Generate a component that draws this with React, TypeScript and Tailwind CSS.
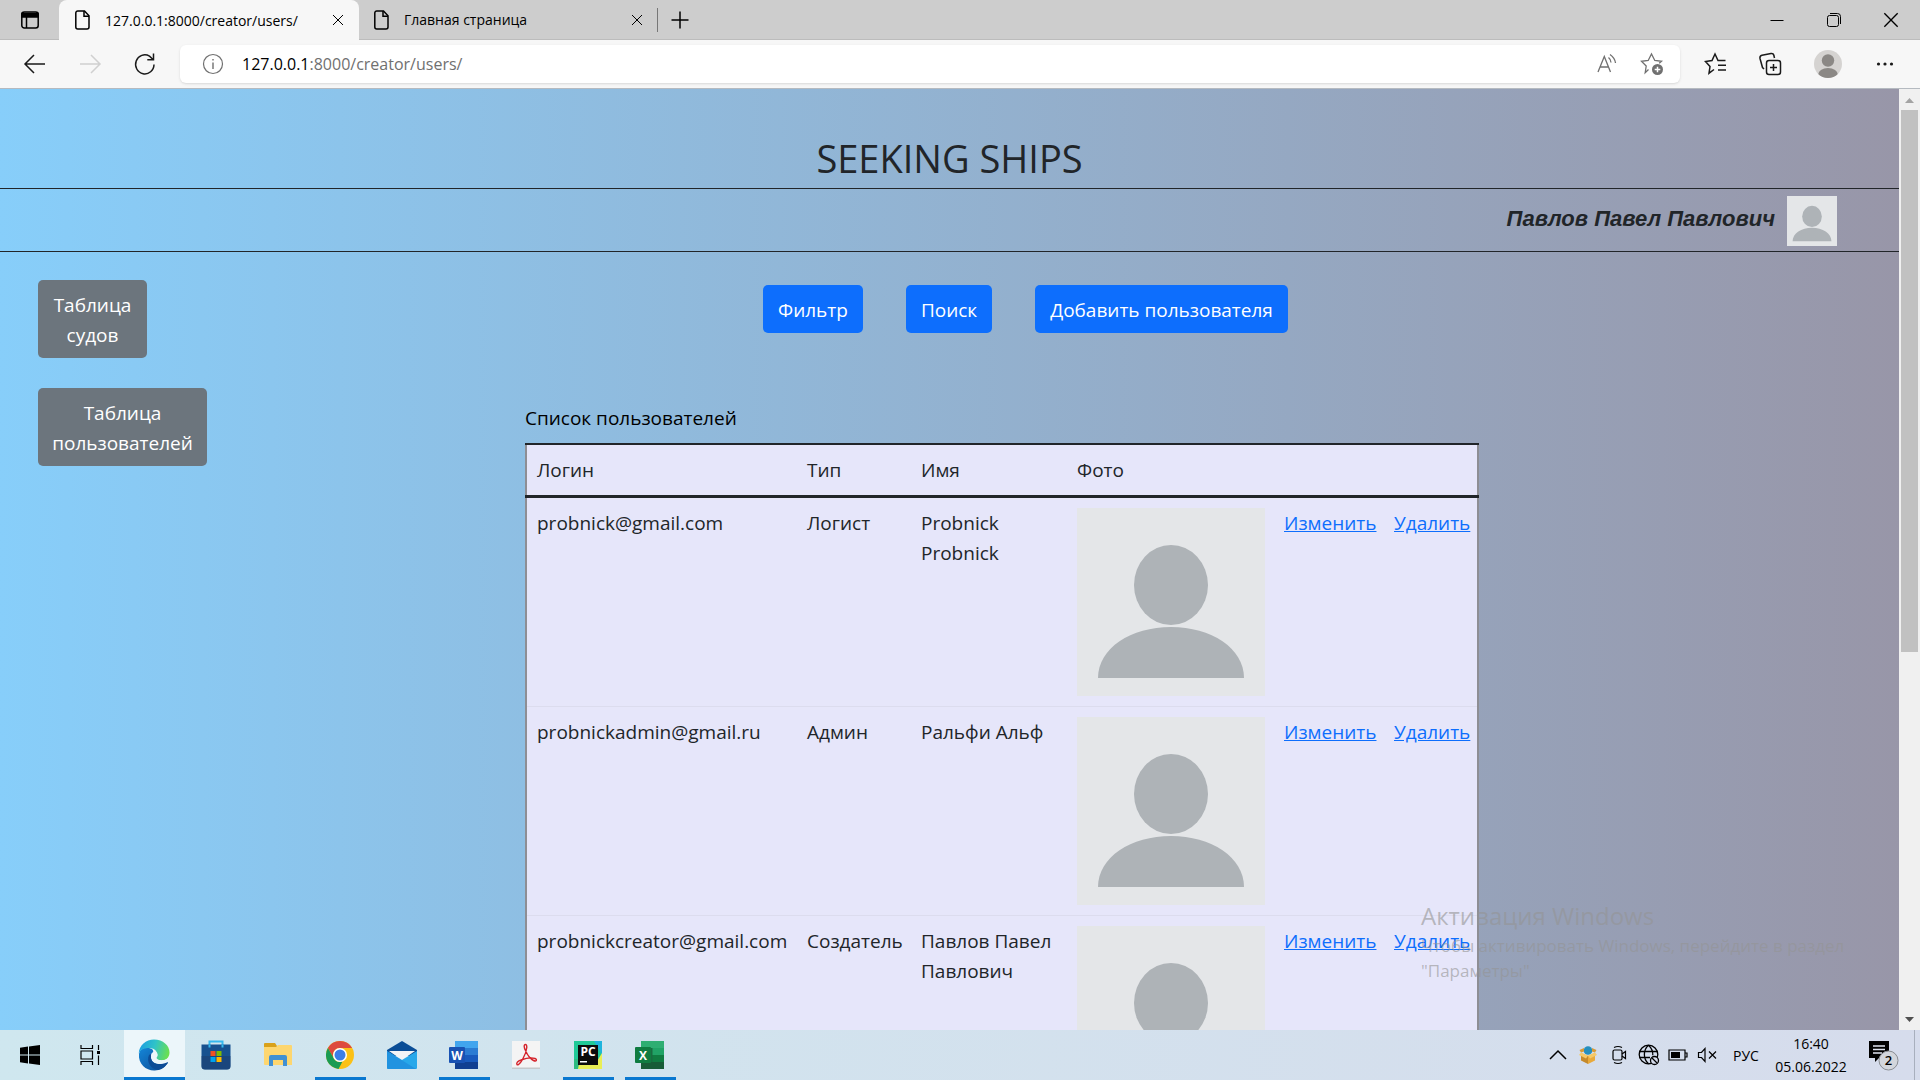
import React from "react";

type IconProps = { className?: string; children: React.ReactNode; box?: string };

function Icon({ className = "size-6", children, box = "0 0 24 24" }: IconProps) {
  return (
    <svg viewBox={box} className={className + " shrink-0"} fill="none" stroke="currentColor" strokeWidth="1.5" aria-hidden="true">
      {children}
    </svg>
  );
}

function PageIcon() {
  return (
    <Icon className="size-5" box="0 0 20 20">
      <path d="M4.8 1h6.7L16 5.800V17a2 2 0 0 1-2 2H4.800a2 2 0 0 1-2-2V3a2 2 0 0 1 2-2Z" />
      <path d="M11 1v5.300h5" />
    </Icon>
  );
}

function CloseIcon({ className = "size-3" }: { className?: string }) {
  return (
    <Icon className={className} box="0 0 12 12">
      <path strokeWidth="1" d="M1 1l10 10M11 1L1 11" />
    </Icon>
  );
}

function TabStrip() {
  return (
    <div className="flex h-10 items-stretch bg-[#cdcdcd] text-[14px] text-black">
      <button aria-label="Меню вкладок" className="flex w-[59px] items-center justify-center border-b border-[#bcbcbc]">
        <Icon className="size-5" box="0 0 20 20">
          <rect x="1.800" y="2" width="16.400" height="16" rx="2.500" />
          <path d="M2 3.500h16v3.500H2z" fill="currentColor" />
          <path d="M6.500 7v11" />
        </Icon>
      </button>
      <div className="flex w-[300px] items-center rounded-t-lg bg-[#f7f7f7] pr-[15px] pl-[14px]">
        <PageIcon />
        <span className="ml-3 flex-1 whitespace-nowrap">127.0.0.1:8000/creator/users/</span>
        <button aria-label="Закрыть вкладку"><CloseIcon /></button>
      </div>
      <div className="flex w-[298px] items-center border-b border-[#bcbcbc] pr-[14px] pl-[13px]">
        <PageIcon />
        <span className="ml-3 flex-1 whitespace-nowrap">Главная страница</span>
        <button aria-label="Закрыть вкладку"><CloseIcon /></button>
      </div>
      <div className="flex flex-1 items-center border-b border-[#bcbcbc]">
        <span className="h-6 w-px bg-[#777]" />
        <button aria-label="Новая вкладка" className="ml-3">
          <Icon className="size-5" box="0 0 20 20"><path d="M10 1.500v17M1.500 10h17" /></Icon>
        </button>
        <div className="ml-auto flex">
          <button aria-label="Свернуть" className="flex w-[57px] justify-center">
            <Icon className="size-4" box="0 0 16 16"><path strokeWidth="1" d="M1.500 8.500h13" /></Icon>
          </button>
          <button aria-label="Восстановить" className="flex w-[57px] justify-center">
            <Icon className="size-4" box="0 0 16 16">
              <rect strokeWidth="1" x="1.500" y="3.500" width="11" height="11" rx="2" />
              <path strokeWidth="1" d="M4 1.500h7.500a3 3 0 0 1 3 3V12" />
            </Icon>
          </button>
          <button aria-label="Закрыть" className="flex w-[58px] justify-center">
            <CloseIcon className="size-4" />
          </button>
        </div>
      </div>
    </div>
  );
}

function Toolbar() {
  return (
    <div className="flex h-[49px] items-center border-b border-[#b5bac0] bg-[#f7f7f7] text-[#1a1a1a]">
      <div className="flex w-[180px] items-center gap-[31px] pl-[23px]">
        <button aria-label="Назад">
          <Icon><path d="M22 12H2.500M11 3L2 12l9 9" /></Icon>
        </button>
        <button aria-label="Вперёд" className="text-[#d0d0d0]">
          <Icon><path d="M2 12h19.500M13 3l9 9-9 9" /></Icon>
        </button>
        <button aria-label="Обновить">
          <Icon><path d="M21 12.500A9.200 9.500 0 1 1 16.500 4.200L20 7.500M20.500 1.500v6.200h-6.200" /></Icon>
        </button>
      </div>
      <div className="flex h-[38px] flex-1 items-center rounded-md bg-white pr-4 pl-[22px] text-[#707070] shadow-sm">
        <Icon className="size-[22px]" box="0 0 22 22">
          <circle strokeWidth="1.200" cx="11" cy="11" r="9.500" />
          <path strokeWidth="1.400" d="M11 9.500v6.500M11 6v1.500" />
        </Icon>
        <span className="ml-[18px] flex-1 text-[16px] whitespace-nowrap">
          <span className="text-black">127.0.0.1</span>:8000/creator/users/
        </span>
        <button aria-label="Прочесть вслух" className="mr-[22px]">
          <Icon className="size-[22px]" box="0 0 22 22">
            <path strokeWidth="1.300" d="M2 19L8.300 3.500 14.500 19M4.200 14h8.200" />
            <path strokeWidth="1.300" d="M12.500 4.500q2.500 2 2.500 5M14 1.500q5 3.500 5.500 8.500" />
          </Icon>
        </button>
        <button aria-label="Добавить в избранное">
          <Icon>
            <path strokeWidth="1.300" d="M8.500 17.500L5.200 20.700l1-6.700-4.700-4.700 6.700-.8L11.500 2l3.300 6.500 6.700.8-2.300 2" />
            <circle cx="17.500" cy="17.500" r="5.500" fill="currentColor" stroke="none" />
            <path stroke="#fff" d="M17.500 14.700v5.600M14.700 17.500h5.600" />
          </Icon>
        </button>
      </div>
      <div className="flex w-[240px] items-center pl-6">
        <button aria-label="Избранное">
          <Icon>
            <path d="M10 17.500l-5 3.700 1-6.700L1.500 9.500l6.500-1L11 2l3 6.500h7.500M14 13.300h8M14 18h8" />
          </Icon>
        </button>
        <button aria-label="Коллекции" className="ml-[30px]">
          <Icon>
            <rect x="8.500" y="8.500" width="14" height="14" rx="2.500" />
            <path d="M15.500 12v7M12 15.500h7M6 17l-1.500-1.500L2 6.500Q1.500 4 4 3.300L13 1.500Q15.500 1 16 4l.5 2" />
          </Icon>
        </button>
        <button aria-label="Профиль" className="ml-8 size-7 overflow-hidden rounded-full bg-[#d5d3d1]">
          <Icon className="size-7" box="0 0 28 28">
            <circle cx="14" cy="10.500" r="6.200" fill="#8b8885" stroke="none" />
            <ellipse cx="14" cy="25" rx="10" ry="7" fill="#8b8885" stroke="none" />
          </Icon>
        </button>
        <button aria-label="Настройки" className="ml-[31px]">
          <Icon>
            <g fill="currentColor" stroke="none"><circle cx="5.500" cy="12" r="1.600" /><circle cx="12" cy="12" r="1.600" /><circle cx="18.500" cy="12" r="1.600" /></g>
          </Icon>
        </button>
      </div>
    </div>
  );
}

function Avatar({ className }: { className: string }) {
  return (
    <svg viewBox="0 0 188 188" className={className} role="img" aria-label="Фото пользователя">
      <path fill="#e4e6e8" d="M0 0h188v188H0z" />
      <ellipse cx="94" cy="77" rx="37" ry="40" fill="#aeb3b7" />
      <path fill="#aeb3b7" d="M21 170C21 140 54 119 94 119s73 21 73 51z" />
    </svg>
  );
}

const users = [
  { login: "probnick@gmail.com", type: "Логист", name: "Probnick Probnick" },
  { login: "probnickadmin@gmail.ru", type: "Админ", name: "Ральфи Альф" },
  { login: "probnickcreator@gmail.com", type: "Создатель", name: "Павлов Павел Павлович" },
];

function UsersTable() {
  return (
    <table className="w-full table-fixed border-collapse border-2 border-[#8e8e94] bg-[#e6e6fa] text-left">
      <caption className="pb-[10px] text-left text-black">Список пользователей</caption>
      <colgroup>
        <col className="w-[271px]" />
        <col className="w-[114px]" />
        <col className="w-[156px]" />
        <col className="w-[207px]" />
        <col className="w-[110px]" />
        <col />
      </colgroup>
      <thead>
        <tr className="border-t-2 border-b-3 border-[#212529]">
          {["Логин", "Тип", "Имя", "Фото"].map((title) => (
            <th key={title} scope="col" className="p-[10px] font-normal">{title}</th>
          ))}
          <td />
          <td />
        </tr>
      </thead>
      <tbody className="align-top">
        {users.map((user) => (
          <tr key={user.login} className="border-b border-[#dcdcee]">
            <td className="p-[10px]">{user.login}</td>
            <td className="p-[10px]">{user.type}</td>
            <td className="p-[10px]">{user.name}</td>
            <td className="p-[10px]"><Avatar className="block size-[188px]" /></td>
            <td className="p-[10px]"><a href="#edit" className="text-[#0d6efd] underline">Изменить</a></td>
            <td className="p-[10px]"><a href="#delete" className="text-[#0d6efd] underline">Удалить</a></td>
          </tr>
        ))}
      </tbody>
    </table>
  );
}

function Page() {
  return (
    <div className="min-w-0 flex-1 overflow-hidden bg-linear-to-r from-[#87cefa] to-[#9896a8] text-[19px] leading-[30px] text-[#212529]">
      <header>
        <h1 className="border-b border-[#212529] pt-[45px] pb-[6px] text-center text-[38px] leading-12">SEEKING SHIPS</h1>
        <div className="flex h-[63px] items-center justify-end gap-3 border-b border-[#212529] pr-[62px] pt-px">
          <span className="pb-1 font-['Liberation_Sans',sans-serif] text-[22px] font-bold italic">Павлов Павел Павлович</span>
          <Avatar className="size-[50px]" />
        </div>
      </header>
      <div className="flex">
        <nav className="flex w-[525px] shrink-0 flex-col items-start gap-[30px] pt-7 pl-[38px]">
          <button className="w-[109px] rounded-[5px] bg-[#6c757d] px-[14px] pt-[10px] pb-2 text-white">Таблица судов</button>
          <button className="w-[169px] rounded-[5px] bg-[#6c757d] px-[14px] pt-[10px] pb-2 text-white">Таблица пользователей</button>
        </nav>
        <main className="w-[954px] shrink-0">
          <div className="flex gap-[43px] pt-[33px] pb-[70px] pl-[238px]">
            {["Фильтр", "Поиск", "Добавить пользователя"].map((label) => (
              <button key={label} className="rounded-[5px] bg-[#0d6efd] px-[15px] pt-[10px] pb-2 whitespace-nowrap text-white">{label}</button>
            ))}
          </div>
          <UsersTable />
        </main>
      </div>
    </div>
  );
}

function Scrollbar() {
  return (
    <div className="flex w-[21px] shrink-0 flex-col items-center bg-[#f0f0f0]" aria-hidden="true">
      <Icon className="h-[21px] w-[21px]" box="0 0 21 21"><path d="M6 14h9l-4.500-5z" fill="#a3a3a3" stroke="none" /></Icon>
      <div className="h-[542px] w-[17px] bg-[#c1c1c1]" />
      <Icon className="mt-auto h-[21px] w-[21px]" box="0 0 21 21"><path d="M6 8h9l-4.500 5z" fill="#505050" stroke="none" /></Icon>
    </div>
  );
}

function EdgeLogo() {
  return (
    <svg viewBox="0 0 32 32" className="size-8" aria-hidden="true">
      <defs>
        <linearGradient id="edgeTop" x1="0" y1="0.300" x2="1" y2="0.500">
          <stop offset="0" stopColor="#1b9de2" /><stop offset=".5" stopColor="#2fc3c8" /><stop offset="1" stopColor="#6be04f" />
        </linearGradient>
        <linearGradient id="edgeLow" x1="0" y1="0" x2="1" y2="1">
          <stop offset="0" stopColor="#1486d8" /><stop offset="1" stopColor="#0b4a93" />
        </linearGradient>
      </defs>
      <path fill="url(#edgeLow)" d="M1 15C2 9 7 8 11 9c5 1 5 4 3 6-3 5 1 10 7 10 4 0 7-2 8-2 1 0 1 1 0 2a15 15 0 0 1-13 6.500C8 31.500 0 25 1 15z" />
      <path fill="#0c4c96" d="M11 16c-3 7 2 14 9 15 4-1 7-3 9-6 1-1 1-2 0-2-1 0-4 2-8 2-6 0-10-5-7-10-1 0-2 0-3 1z" />
      <path fill="url(#edgeTop)" d="M.7 15C1 6 8 .5 16 .5c9 0 15.500 6 15.500 13 0 5-3.500 8-8 8-4 0-6-1.500-5-3 1-1 1.500-2 1-3.500C18.500 11 15 9 11 9 6 9 1.500 11 .7 15z" />
      <path fill="#ecf6fa" d="M13 16.500c0-2.500 2-4 4-3.500 2 .5 3 2.500 1.700 4.500-1.200 2 1.300 3.700 4.800 3.700 3 0 5-.7 6.500-2.200l.5 3.500c-2 1.500-5 2.500-8.500 2.500-5 0-9-4-9-8.500z" />
    </svg>
  );
}

function StoreLogo() {
  return (
    <svg viewBox="0 0 32 32" className="size-8" aria-hidden="true">
      <path d="M9.500 7V2.500h13V7" fill="none" stroke="#36b8ee" strokeWidth="2" />
      <path d="M1.500 5.500h29V27a3.500 3.500 0 0 1-3.500 3.500H5A3.500 3.500 0 0 1 1.500 27z" fill="#17518f" />
      <path d="M1.500 17h29v10a3.500 3.500 0 0 1-3.500 3.500H5A3.500 3.500 0 0 1 1.500 27z" fill="#1d3f72" opacity=".6" />
      <path d="M9.500 5.500v3M22.500 5.500v3" stroke="#36b8ee" strokeWidth="2" />
      <path fill="#f25022" d="M10.500 12h5v5h-5z" /><path fill="#7fba00" d="M16.500 12h5v5h-5z" />
      <path fill="#00a4ef" d="M10.500 18h5v5h-5z" /><path fill="#ffb900" d="M16.500 18h5v5h-5z" />
    </svg>
  );
}

function ExplorerLogo() {
  return (
    <svg viewBox="0 0 32 32" className="size-8" aria-hidden="true">
      <path fill="#d9a11a" d="M2 5a1 1 0 0 1 1-1h10l2 3v3H2z" />
      <path fill="#fdd66f" d="M2 8h12l2-2h13a1 1 0 0 1 1 1v19H3a1 1 0 0 1-1-1z" />
      <path fill="#4090d3" d="M9 16h14a2 2 0 0 1 2 2v9h-4v-6H11v6H7v-9a2 2 0 0 1 2-2z" />
    </svg>
  );
}

function ChromeLogo() {
  return (
    <svg viewBox="0 0 28 28" className="size-7" aria-hidden="true">
      <circle cx="14" cy="14" r="14" fill="#fbc116" />
      <path fill="#dd4b3e" d="M14 0a14 14 0 0 1 12.100 7H14a7 7 0 0 0-6.100 10.500L1.900 7A14 14 0 0 1 14 0z" />
      <path fill="#1a9b53" d="M1.900 7l6 10.500A7 7 0 0 0 14 21l2.500-.4L12.500 28A14 14 0 0 1 1.900 7z" />
      <circle cx="14" cy="14" r="7" fill="#fff" /><circle cx="14" cy="14" r="5.500" fill="#3c7ee8" />
    </svg>
  );
}

function MailLogo() {
  return (
    <svg viewBox="0 0 32 32" className="size-8" aria-hidden="true">
      <path fill="#0a4d96" d="M1 11L16 2l15 9v6H1z" />
      <path fill="#f2f4f7" d="M3 12h26l-13 9z" />
      <path fill="#28a8ea" d="M1 12l15 9 15-9v17a1 1 0 0 1-1 1H2a1 1 0 0 1-1-1z" />
      <path fill="#1c86d8" d="M1 12l29 18H2a1 1 0 0 1-1-1z" opacity=".6" />
    </svg>
  );
}

function OfficeLogo({ letter, shades, badge }: { letter: string; shades: string[]; badge: string }) {
  return (
    <svg viewBox="0 0 32 32" className="size-8" aria-hidden="true">
      {shades.map((shade, i) => (
        <path key={shade} fill={shade} d={`M7 ${2 + i * 7}h23v7H7z`} />
      ))}
      {letter === "X" && <path fill="#1a6b41" d="M7 9h11.500v14H7z" />}
      <rect x="1" y="8" width="16" height="16" rx="1" fill={badge} />
      <text x="9" y="20.500" textAnchor="middle" fill="#fff" fontSize="12" fontWeight="700" fontFamily="Open Sans, sans-serif">{letter}</text>
    </svg>
  );
}

function AcrobatLogo() {
  return (
    <svg viewBox="0 0 32 32" className="size-8" aria-hidden="true">
      <rect x="2" y="3" width="28" height="27" fill="#c5c8cb" /><rect x="2" y="2" width="28" height="26.500" fill="#f4f4f4" />
      <path fill="none" stroke="#d5252c" strokeWidth="1.400" d="M15.500 5.500c-2 0-1.500 3 0 6 1.500 3.500 4 8 8 10 3 1.500 4-1 1.500-2-4-1.500-10 0-14 1.500-3 1-5 3-4 4.500s4-2 6-6c2-3.500 3.500-8 3.800-11 0-2-.3-3-1.300-3z" />
    </svg>
  );
}

function PyCharmLogo() {
  return (
    <svg viewBox="0 0 32 32" className="size-8" aria-hidden="true">
      <path fill="#20c997" d="M2 2h28v28H2z" /><path fill="#1eb4dd" d="M22 2h8v14z" /><path fill="#e9ee55" d="M30 14v16H4l2-6h18z" /><path fill="#2dbb80" d="M2 20h6l-2 10H2z" />
      <path fill="#0c0c0c" d="M6 6h20v20H6z" />
      <text x="16" y="17" textAnchor="middle" fill="#fff" fontSize="12" fontWeight="700" fontFamily="Open Sans, sans-serif">PC</text>
      <path fill="#fff" d="M8 22h7v1.500H8z" />
    </svg>
  );
}

const apps = [
  { name: "Microsoft Edge", open: true, active: true, logo: <EdgeLogo /> },
  { name: "Microsoft Store", logo: <StoreLogo /> },
  { name: "Проводник", logo: <ExplorerLogo /> },
  { name: "Google Chrome", open: true, logo: <ChromeLogo /> },
  { name: "Почта", logo: <MailLogo /> },
  { name: "Word", open: true, logo: <OfficeLogo letter="W" badge="#1852b3" shades={["#41a5ee", "#2b7cd3", "#185abd", "#103f91"]} /> },
  { name: "Acrobat", logo: <AcrobatLogo /> },
  { name: "PyCharm", open: true, logo: <PyCharmLogo /> },
  { name: "Excel", open: true, logo: <OfficeLogo letter="X" badge="#107c41" shades={["#2fae72", "#21a366", "#107c41", "#185c37"]} /> },
];

function Taskbar() {
  return (
    <footer className="flex h-[50px] shrink-0 items-stretch bg-linear-to-r from-[#cfe7ef] to-[#d6dcec] text-black">
      <button aria-label="Пуск" className="flex w-[60px] items-center justify-center">
        <Icon className="size-5" box="0 0 20 20">
          <path fill="currentColor" stroke="none" d="M0 2.700L8 1.600V9.500H0zM9 1.500L20 0v9.500H9zM0 10.500h8v8L0 17.300zM9 10.500h11V20L9 18.600z" />
        </Icon>
      </button>
      <button aria-label="Представление задач" className="flex w-16 items-center justify-center pr-1">
        <Icon className="size-5" box="0 0 20 20">
          <path strokeWidth="1.200" d="M1 0v3.500h11.500V0M1 6h11.500v8H1zM1 20v-3.500h11.500V20M18.500 0v5M18.500 10.500V20" />
          <path fill="currentColor" stroke="none" d="M17 6h3v3h-3z" />
        </Icon>
      </button>
      <div className="flex gap-px">
        {apps.map((app) => (
          <button key={app.name} aria-label={app.name} className={"relative flex w-[61px] items-center justify-center pr-[2px] " + (app.active ? "bg-[#ecf6fa]" : "")}>
            {app.logo}
            {app.open && <span className={"absolute bottom-0 h-[3px] bg-[#0a78d0] " + (app.active ? "inset-x-0" : "inset-x-[5px]")} />}
          </button>
        ))}
      </div>
      <div className="ml-auto flex items-center">
        <button aria-label="Скрытые значки" className="mr-[10px]">
          <Icon className="size-5" box="0 0 20 20"><path d="M2 14l8-8 8 8" /></Icon>
        </button>
        <Icon className="mr-[11px] size-5" box="0 0 20 20">
          <g stroke="none">
            <path fill="#c58a2c" d="M3 8l7 3v8l-7-3.500z" /><path fill="#e9aa3b" d="M17 8l-7 3v8l7-3.500z" />
            <circle cx="10" cy="5.500" r="4.300" fill="#268fbd" />
            <path fill="#f5c968" d="M3 7.500L10 10.500l-2 3L1 10zM17 7.500L10 10.500l2 3L19 10z" /><path fill="#d79a35" d="M3 7.500L1.500 5 6 3v3.500zM17 7.500L18.500 5 14 3v3.500z" />
          </g>
        </Icon>
        <Icon className="mr-[9px] size-5" box="0 0 20 20">
          <rect strokeWidth="1.200" x="4" y="5" width="9" height="10" rx="1.500" />
          <path strokeWidth="1.200" d="M13 9l3.500-2.500v7L13 11M5 2.500q4-2 8 0M5 17.500q4 2 8 0" />
        </Icon>
        <Icon className="mr-[8px] size-[22px]" box="0 0 22 22">
          <circle strokeWidth="1.300" cx="10.500" cy="10.500" r="9.300" />
          <path strokeWidth="1.300" d="M1.500 7.500h18M1.500 13.500H12M10.500 1.200C5 6 5 15 10.500 19.800M10.500 1.200c3.300 3 4.500 6 4.300 10" />
          <circle cx="16.500" cy="16.500" r="4" fill="#d6dcec" strokeWidth="1.300" /><path strokeWidth="1.300" d="M14 14l5 5" />
        </Icon>
        <Icon className="mr-[9px] size-5" box="0 0 20 20">
          <path strokeWidth="1.200" d="M1 5h16v10H1zM17 8h2v4h-2" /><path fill="currentColor" stroke="none" d="M3 7h9v6H3z" />
        </Icon>
        <Icon className="mr-4 size-5" box="0 0 20 20">
          <path strokeWidth="1.200" d="M1.500 7.500h3l3.500-4v13l-3.500-4h-3zM12 6.500l7 7M19 6.500l-7 7" />
        </Icon>
        <span className="w-7 text-[14px]">РУС</span>
        <div className="ml-[10px] w-20 text-center text-[14px] leading-[23px] whitespace-nowrap">
          <div>16:40</div>
          <div>05.06.2022</div>
        </div>
        <button aria-label="Уведомления: 2" className="mr-[15px] ml-4">
          <svg viewBox="0 0 32 32" className="size-8" aria-hidden="true">
            <path d="M2 2h20v17h-10l-4 4v-4H2z" fill="#000" />
            <path d="M6 7h12M6 10.500h12M6 14h9" stroke="#dfe4f0" strokeWidth="1.300" />
            <circle cx="21.500" cy="21.500" r="9.500" fill="#d3d6dc" stroke="#8a8d92" />
            <text x="21.500" y="26" textAnchor="middle" fontSize="13" fontWeight="600" fontFamily="Open Sans, sans-serif">2</text>
          </svg>
        </button>
        <span className="mr-[5px] h-[50px] w-px bg-[#a8afbd]" />
      </div>
    </footer>
  );
}

export default function App() {
  return (
    <div className="relative flex h-screen flex-col overflow-hidden font-['Open_Sans','Noto_Sans',sans-serif]">
      <TabStrip />
      <Toolbar />
      <div className="flex min-h-0 flex-1">
        <Page />
        <Scrollbar />
      </div>
      <Taskbar />
      <div className="pointer-events-none absolute right-[70px] bottom-[97px] w-[429px] text-[17px] leading-[25px] text-[#949494]/60">
        <p className="text-[24px] leading-[34px]">Активация Windows</p>
        <p>Чтобы активировать Windows, перейдите в раздел "Параметры"</p>
      </div>
    </div>
  );
}
